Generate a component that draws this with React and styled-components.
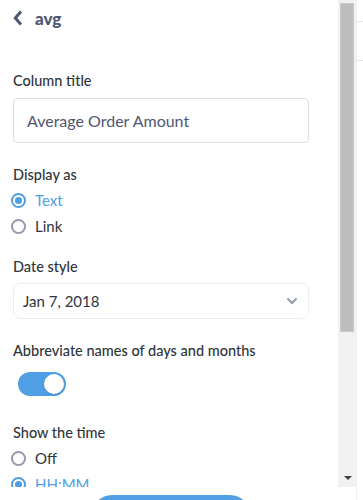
import React from 'react'
import styled, { createGlobalStyle } from 'styled-components'

const Global = createGlobalStyle`
  html, body {
    margin: 0;
    padding: 0;
    background: #fff;
    overflow: hidden;
  }
  body {
    font-family: Lato, "Open Sans", sans-serif;
    color: #2e353b;
  }
`

const Page = styled.div`
  display: flex;
  width: 363px;
  height: 500px;
  overflow: hidden;
`

const Sidebar = styled.div`
  width: 356px;
  display: flex;
  flex-direction: column;
`

const Body = styled.div`
  display: flex;
  height: 487px;
  flex-shrink: 0;
`

const Panel = styled.div`
  flex: 1;
  overflow: hidden;
  padding: 8px 0 0 13px;
`

const ScrollTrack = styled.div`
  width: 18px;
  background: #f1f1f1;
  display: flex;
  flex-direction: column;
  align-items: center;
  justify-content: space-between;
  padding: 3px 0 7px;
  box-sizing: border-box;
`

const ScrollThumb = styled.div`
  width: 14px;
  height: 329px;
  background: #bdbdbd;
  border: 1px solid #c9c9c9;
  box-sizing: border-box;
`

const ScrollArrow = styled.div`
  width: 0;
  height: 0;
  border-left: 4px solid transparent;
  border-right: 4px solid transparent;
  border-top: 4px solid #3d3f4a;
  margin-left: 1px;
`

const Form = styled.div`
  width: 296px;
`

const Header = styled.div`
  display: flex;
  align-items: center;
  height: 20px;
  gap: 12px;
  color: #4c5773;
  font-size: 17px;
  font-weight: 900;
  cursor: pointer;
`

const Label = styled.div`
  font-size: 14.5px;
  line-height: 20px;
  font-weight: 500;
  color: #2e353b;
  margin-top: ${p => p.$top}px;
  margin-bottom: ${p => p.$bottom}px;
`

const Input = styled.div`
  box-sizing: border-box;
  height: 45px;
  border: 1px solid #dcdfe3;
  border-radius: 4px;
  padding: 0 13px;
  display: flex;
  align-items: center;
  font-size: 16px;
  color: #4c5773;
`

const Select = styled.div`
  box-sizing: border-box;
  height: 36px;
  border: 1px solid #eceef1;
  border-radius: 7px;
  padding: 0 10px 0 9px;
  display: flex;
  align-items: center;
  justify-content: space-between;
  font-size: 15px;
  color: #2e353b;
`

const RadioRow = styled.div`
  display: flex;
  align-items: center;
  height: 26px;
  gap: 9px;
  margin-left: -2px;
  font-size: 15px;
  color: ${p => (p.$checked ? '#509ee3' : '#2e353b')};
`

const Dot = styled.span`
  box-sizing: border-box;
  width: 15px;
  height: 15px;
  border-radius: 50%;
  border: 2px solid ${p => (p.$checked ? '#509ee3' : '#949aab')};
  display: flex;
  align-items: center;
  justify-content: center;
  &::after {
    content: '';
    width: 7px;
    height: 7px;
    border-radius: 50%;
    background: ${p => (p.$checked ? '#509ee3' : 'transparent')};
  }
`

const Toggle = styled.div`
  box-sizing: border-box;
  width: 48px;
  height: 24px;
  margin-left: 5px;
  border-radius: 12px;
  background: #509ee3;
  padding: 2px;
  display: flex;
  justify-content: flex-end;
`

const Knob = styled.span`
  width: 20px;
  height: 20px;
  border-radius: 50%;
  background: #fff;
  box-shadow: 0 1px 2px rgba(0, 0, 0, 0.15);
`

const Footer = styled.div`
  flex: 1;
  display: flex;
  justify-content: center;
  padding: 8px 14px 0 0;
`

const DoneButton = styled.button`
  width: 158px;
  height: 40px;
  border: none;
  border-radius: 20px;
  background: #509ee3;
  color: #fff;
  font-family: Lato, sans-serif;
  font-size: 15px;
  font-weight: 700;
`

const Backdrop = styled.div`
  flex: 1;
  border-left: 1px solid #eef0f2;
  display: flex;
  flex-direction: column;
`

const Rule = styled.div`
  height: ${p => p.$h}px;
  border-bottom: 1px solid #e6e8eb;
`

const Radio = ({ checked, children }) => (
  <RadioRow $checked={checked}>
    <Dot $checked={checked} />
    {children}
  </RadioRow>
)

export default function App() {
  return (
    <Page>
      <Global />
      <Sidebar>
        <Body>
          <Panel>
            <Form>
              <Header>
                <svg width="10" height="16" viewBox="0 0 10 16">
                  <path d="M8 1.5L2.3 8 8 14.5" fill="none" stroke="#4c5773" strokeWidth="3" />
                </svg>
                avg
              </Header>

              <Label $top={43} $bottom={7}>Column title</Label>
              <Input>Average Order Amount</Input>

              <Label $top={22} $bottom={2}>Display as</Label>
              <Radio checked>Text</Radio>
              <Radio>Link</Radio>

              <Label $top={18} $bottom={6}>Date style</Label>
              <Select>
                Jan 7, 2018
                <svg width="12" height="8" viewBox="0 0 12 8">
                  <path d="M1.5 1.5L6 6l4.5-4.5" fill="none" stroke="#949aab" strokeWidth="2" />
                </svg>
              </Select>

              <Label $top={22} $bottom={11}>Abbreviate names of days and months</Label>
              <Toggle>
                <Knob />
              </Toggle>

              <Label $top={27} $bottom={2}>Show the time</Label>
              <Radio>Off</Radio>
              <Radio checked>HH:MM</Radio>
              <Radio>HH:MM:SS</Radio>
            </Form>
          </Panel>
          <ScrollTrack>
            <ScrollThumb />
            <ScrollArrow />
          </ScrollTrack>
        </Body>
        <Footer>
          <DoneButton>Done</DoneButton>
        </Footer>
      </Sidebar>
      <Backdrop>
        <Rule $h={21} />
        <Rule $h={38} />
      </Backdrop>
    </Page>
  )
}
